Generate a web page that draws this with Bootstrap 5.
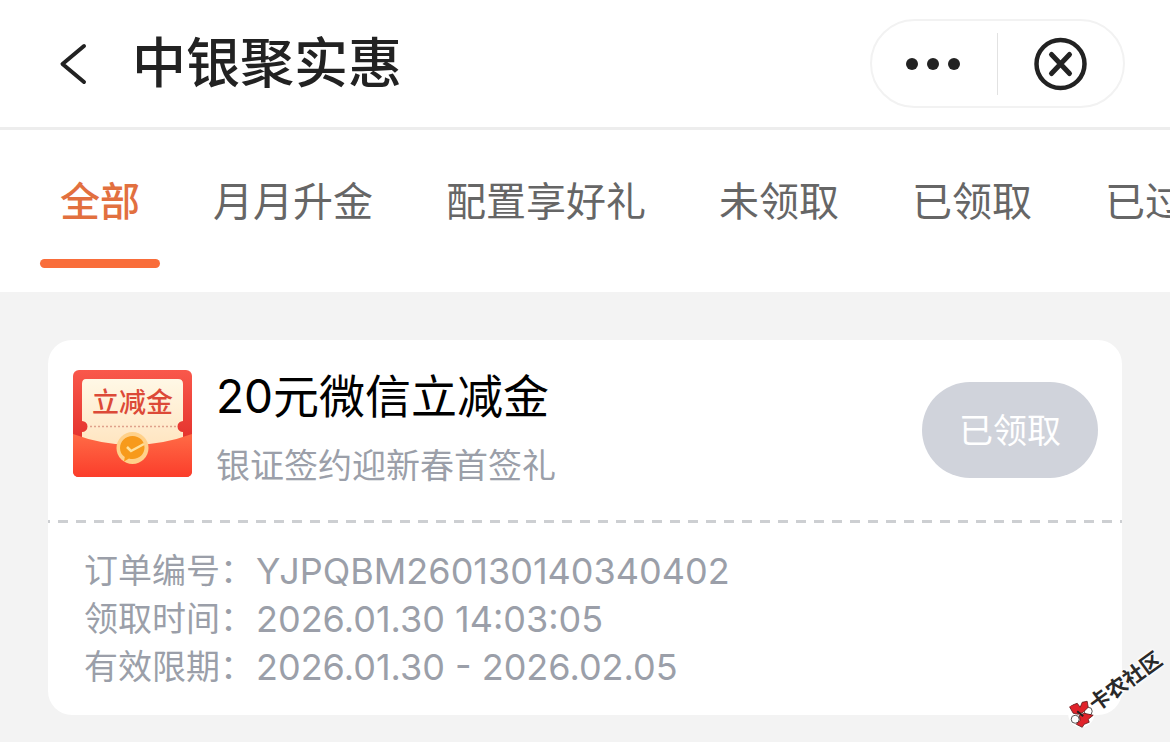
<!DOCTYPE html>
<html lang="zh-CN">
<head>
<meta charset="utf-8">
<meta name="viewport" content="width=device-width, initial-scale=1">
<title>中银聚实惠</title>
<link href="https://cdn.jsdelivr.net/npm/bootstrap@5.3.0/dist/css/bootstrap.min.css" rel="stylesheet">
<style>
  body { font-family: Inter, "Noto Sans CJK SC", sans-serif; background: #f3f3f3; color: #000; }
  .app-header { height: 130px; padding: 0 45px 0 56px; border-bottom: 3px solid #ededed; }
  .app-title { font-size: 54px; line-height: 64px; font-weight: 500; color: #222; margin-left: 40px; }
  .capsule { width: 255px; height: 89px; border: 2px solid #f2f2f2; border-radius: 45px; }
  .capsule button { flex: 1 1 0; }
  .capsule-rule { width: 1px; height: 62px; background: #e2e2e2; }
  .tab-bar { height: 162px; padding: 36px 60px 0; gap: 73px; overflow: hidden; }
  .tab-bar .nav-link { padding: 0; font-size: 40px; line-height: 72px; color: #666; white-space: nowrap; height: 104px; position: relative; }
  .tab-bar .nav-link.active { color: #e2703f; font-weight: 500; }
  .tab-bar .nav-link.active::after { content: ""; position: absolute; left: -20px; right: -20px; bottom: 2px; height: 9px; border-radius: 5px; background: #f96d3a; }
  .coupon { border: 0; border-radius: 24px; }
  .coupon-head { padding: 24px; height: 180px; gap: 24px; }
  .coupon-title { font-size: 46px; line-height: 64px; font-weight: 400; margin: 0 0 14px; }
  .coupon-note { font-size: 34px; line-height: 48px; color: #9b9fa9; margin: 0; }
  .btn-claimed, .btn-claimed:disabled { width: 176px; height: 96px; font-size: 34px; padding: 0; color: #fff; background: #d0d3db; border: 0; opacity: 1; }
  .tear-line { height: 3px; background: repeating-linear-gradient(90deg, transparent 0 8px, #cdcfd2 8px 18px) 2px 0; }
  .coupon-info { padding: 24px 36px; font-size: 36px; line-height: 48px; color: #9b9fa9; }
  .coupon-info dt { font-size: 34px; font-weight: 400; margin-right: 2px; }
  .watermark { position: absolute; right: -2px; bottom: 61px; width: 112px; transform: rotate(-36deg); pointer-events: none; }
  .watermark span { font-size: 21px; line-height: 26px; font-weight: 700; color: #2a2a2a; white-space: nowrap; text-shadow: 0 0 3px #fff, 0 0 3px #fff, 0 0 5px #fff; }
</style>
<script src="https://cdn.jsdelivr.net/npm/bootstrap@5.3.0/dist/js/bootstrap.bundle.min.js"></script>
</head>
<body>
<div class="position-relative min-vh-100 overflow-hidden">
  <header class="app-header bg-white d-flex align-items-center">
    <button class="btn p-0 border-0 d-flex" type="button" aria-label="返回">
      <svg width="36" height="48" viewBox="0 0 36 48" fill="none" stroke="#222" stroke-width="4" stroke-linecap="round" stroke-linejoin="round"><path d="M28 6 6.500 24 28 42"/></svg>
    </button>
    <h1 class="app-title mb-0">中银聚实惠</h1>
    <div class="capsule ms-auto d-flex align-items-center">
      <button class="btn p-0 border-0 d-flex justify-content-center" type="button" aria-label="更多">
        <svg width="60" height="14" viewBox="0 0 60 14" fill="#222"><circle cx="7" cy="7" r="6"/><circle cx="28" cy="7" r="6"/><circle cx="49" cy="7" r="6"/></svg>
      </button>
      <span class="capsule-rule"></span>
      <button class="btn p-0 border-0 d-flex justify-content-center" type="button" aria-label="关闭">
        <svg width="54" height="54" viewBox="0 0 54 54" fill="none" stroke="#222" stroke-linecap="round"><circle cx="26.500" cy="27" r="24" stroke-width="4.500"/><path d="M17.500 17.500 35.500 36.500M35.500 17.500 17.500 36.500" stroke-width="5"/></svg>
      </button>
    </div>
  </header>

  <nav class="tab-bar nav flex-nowrap bg-white">
    <a class="nav-link active" href="#" aria-current="page">全部</a>
    <a class="nav-link" href="#">月月升金</a>
    <a class="nav-link" href="#">配置享好礼</a>
    <a class="nav-link" href="#">未领取</a>
    <a class="nav-link" href="#">已领取</a>
    <a class="nav-link" href="#">已过期</a>
  </nav>

  <main class="p-5">
    <article class="card coupon">
      <div class="coupon-head d-flex">
        <svg class="flex-shrink-0" width="120" height="120" viewBox="0 0 120 120" role="img" aria-label="立减金">
          <defs>
            <linearGradient id="back" x1="0" y1="0" x2="0" y2="1"><stop offset="0" stop-color="#f9584b"/><stop offset="1" stop-color="#d91f1e"/></linearGradient>
            <linearGradient id="front" x1="0" y1="0" x2="0" y2="1"><stop offset="0" stop-color="#ff6b46"/><stop offset="1" stop-color="#fb3d2b"/></linearGradient>
            <linearGradient id="paper" x1="0" y1="0" x2="0" y2="1"><stop offset="0" stop-color="#fff8e6"/><stop offset="1" stop-color="#ffe3bd"/></linearGradient>
          </defs>
          <rect x="1" y="6" width="119" height="107" rx="6" fill="url(#back)"/>
          <path d="M14 15h92q5 0 5 5v37a5.500 5.500 0 0 0 0 11v20H10V68a5.500 5.500 0 0 0 0-11V20q0-5 4-5z" fill="url(#paper)"/>
          <path d="M18 62.500h88" stroke="#dfa18a" stroke-width="1.500" stroke-dasharray="2 2"/>
          <text x="60.500" y="48" text-anchor="middle" font-size="27" font-weight="500" fill="#dc4a38">立减金</text>
          <path d="M1 70Q60 92 120 70v37q0 6-6 6H7q-6 0-6-6z" fill="url(#front)"/>
          <circle cx="60.500" cy="84" r="16" fill="#ffd18a"/>
          <path d="M60.500 72c7 0 12 5 12 11.500S67.500 95 60.500 95q-2 0-3.500-.5l-5 3 .8-4.500c-3-2-4.800-5-4.800-9C48 77 53.500 72 60.500 72z" fill="#f79a1b"/>
          <path d="m55 83 4 4 13-7" fill="none" stroke="#ffe09a" stroke-width="2.500"/>
        </svg>
        <div class="flex-grow-1">
          <h2 class="coupon-title">20元微信立减金</h2>
          <p class="coupon-note">银证签约迎新春首签礼</p>
        </div>
        <button class="btn btn-claimed rounded-pill align-self-center flex-shrink-0" type="button" disabled>已领取</button>
      </div>
      <div class="tear-line"></div>
      <dl class="coupon-info mb-0">
        <div class="d-flex"><dt>订单编号：</dt><dd class="mb-0">YJPQBM260130140340402</dd></div>
        <div class="d-flex"><dt>领取时间：</dt><dd class="mb-0">2026.01.30 14:03:05</dd></div>
        <div class="d-flex"><dt>有效限期：</dt><dd class="mb-0">2026.01.30 - 2026.02.05</dd></div>
      </dl>
    </article>
  </main>

  <div class="watermark d-flex align-items-center">
    <svg class="flex-shrink-0" width="26" height="26" viewBox="0 0 26 26">
      <circle cx="13" cy="13" r="13" fill="#fff"/>
      <g transform="rotate(36 13 13)">
        <ellipse cx="20" cy="10" rx="4" ry="4" fill="#fff" stroke="#555"/>
        <ellipse cx="7" cy="18" rx="4" ry="4" fill="#fff" stroke="#555"/>
        <path d="m1 5 8-3 3 4 2-5 5-1 1 6-5 5-5 2-5-1z" fill="#e0232b" stroke="#5a1a1a" stroke-width=".8"/>
        <path d="m11 14 5-2 9 2-5 4 1 3-5 2-2 3-6-3 4-4z" fill="#e0232b" stroke="#5a1a1a" stroke-width=".8"/>
        <path d="m9 10 6 5" stroke="#222" stroke-width="2"/>
      </g>
    </svg>
    <span>卡农社区</span>
  </div>
</div>
</body>
</html>
